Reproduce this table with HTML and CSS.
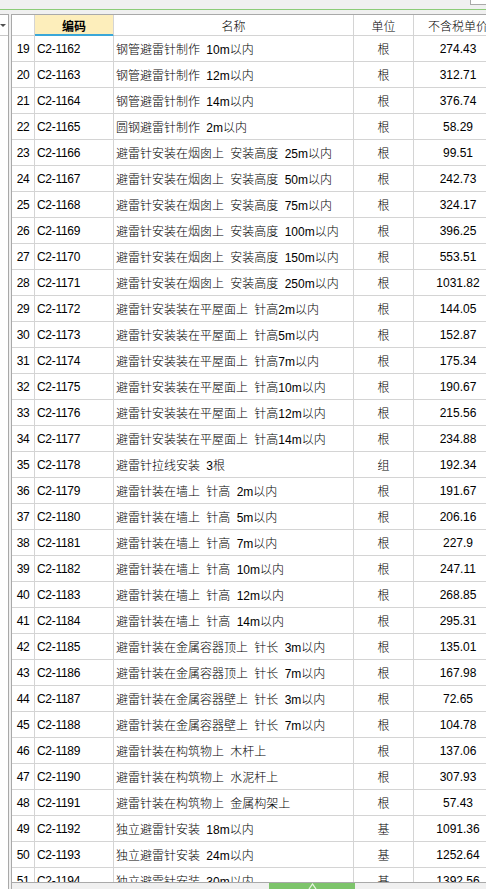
FILE: index.html
```html
<!DOCTYPE html>
<html lang="zh-CN">
<head>
<meta charset="utf-8">
<title>定额列表</title>
<link rel="stylesheet" href="styles.css">
</head>
<body>
<div class="top"><div class="corner"></div></div>
<div class="rule"></div>
<div class="main">
  <div class="side">
    <div class="side-head"><span class="caret"></span></div>
  </div>
  <div class="frame">
    <div class="viewport">
      <div class="grid">
        <div class="hd"></div><div class="hd code-hd">编码</div><div class="hd">名称</div><div class="hd">单位</div><div class="hd">不含税单价</div>

        <div class="c rn">19</div><div class="c code">C2-1162</div><div class="c name">钢管避雷针制作 10m以内</div><div class="c unit">根</div><div class="c price">274.43</div>
        <div class="c rn">20</div><div class="c code">C2-1163</div><div class="c name">钢管避雷针制作 12m以内</div><div class="c unit">根</div><div class="c price">312.71</div>
        <div class="c rn">21</div><div class="c code">C2-1164</div><div class="c name">钢管避雷针制作 14m以内</div><div class="c unit">根</div><div class="c price">376.74</div>
        <div class="c rn">22</div><div class="c code">C2-1165</div><div class="c name">圆钢避雷针制作 2m以内</div><div class="c unit">根</div><div class="c price">58.29</div>
        <div class="c rn">23</div><div class="c code">C2-1166</div><div class="c name">避雷针安装在烟囱上 安装高度 25m以内</div><div class="c unit">根</div><div class="c price">99.51</div>
        <div class="c rn">24</div><div class="c code">C2-1167</div><div class="c name">避雷针安装在烟囱上 安装高度 50m以内</div><div class="c unit">根</div><div class="c price">242.73</div>
        <div class="c rn">25</div><div class="c code">C2-1168</div><div class="c name">避雷针安装在烟囱上 安装高度 75m以内</div><div class="c unit">根</div><div class="c price">324.17</div>
        <div class="c rn">26</div><div class="c code">C2-1169</div><div class="c name">避雷针安装在烟囱上 安装高度 100m以内</div><div class="c unit">根</div><div class="c price">396.25</div>
        <div class="c rn">27</div><div class="c code">C2-1170</div><div class="c name">避雷针安装在烟囱上 安装高度 150m以内</div><div class="c unit">根</div><div class="c price">553.51</div>
        <div class="c rn">28</div><div class="c code">C2-1171</div><div class="c name">避雷针安装在烟囱上 安装高度 250m以内</div><div class="c unit">根</div><div class="c price">1031.82</div>
        <div class="c rn">29</div><div class="c code">C2-1172</div><div class="c name">避雷针安装装在平屋面上 针高2m以内</div><div class="c unit">根</div><div class="c price">144.05</div>
        <div class="c rn">30</div><div class="c code">C2-1173</div><div class="c name">避雷针安装装在平屋面上 针高5m以内</div><div class="c unit">根</div><div class="c price">152.87</div>
        <div class="c rn">31</div><div class="c code">C2-1174</div><div class="c name">避雷针安装装在平屋面上 针高7m以内</div><div class="c unit">根</div><div class="c price">175.34</div>
        <div class="c rn">32</div><div class="c code">C2-1175</div><div class="c name">避雷针安装装在平屋面上 针高10m以内</div><div class="c unit">根</div><div class="c price">190.67</div>
        <div class="c rn">33</div><div class="c code">C2-1176</div><div class="c name">避雷针安装装在平屋面上 针高12m以内</div><div class="c unit">根</div><div class="c price">215.56</div>
        <div class="c rn">34</div><div class="c code">C2-1177</div><div class="c name">避雷针安装装在平屋面上 针高14m以内</div><div class="c unit">根</div><div class="c price">234.88</div>
        <div class="c rn">35</div><div class="c code">C2-1178</div><div class="c name">避雷针拉线安装 3根</div><div class="c unit">组</div><div class="c price">192.34</div>
        <div class="c rn">36</div><div class="c code">C2-1179</div><div class="c name">避雷针装在墙上 针高 2m以内</div><div class="c unit">根</div><div class="c price">191.67</div>
        <div class="c rn">37</div><div class="c code">C2-1180</div><div class="c name">避雷针装在墙上 针高 5m以内</div><div class="c unit">根</div><div class="c price">206.16</div>
        <div class="c rn">38</div><div class="c code">C2-1181</div><div class="c name">避雷针装在墙上 针高 7m以内</div><div class="c unit">根</div><div class="c price">227.9</div>
        <div class="c rn">39</div><div class="c code">C2-1182</div><div class="c name">避雷针装在墙上 针高 10m以内</div><div class="c unit">根</div><div class="c price">247.11</div>
        <div class="c rn">40</div><div class="c code">C2-1183</div><div class="c name">避雷针装在墙上 针高 12m以内</div><div class="c unit">根</div><div class="c price">268.85</div>
        <div class="c rn">41</div><div class="c code">C2-1184</div><div class="c name">避雷针装在墙上 针高 14m以内</div><div class="c unit">根</div><div class="c price">295.31</div>
        <div class="c rn">42</div><div class="c code">C2-1185</div><div class="c name">避雷针装在金属容器顶上 针长 3m以内</div><div class="c unit">根</div><div class="c price">135.01</div>
        <div class="c rn">43</div><div class="c code">C2-1186</div><div class="c name">避雷针装在金属容器顶上 针长 7m以内</div><div class="c unit">根</div><div class="c price">167.98</div>
        <div class="c rn">44</div><div class="c code">C2-1187</div><div class="c name">避雷针装在金属容器壁上 针长 3m以内</div><div class="c unit">根</div><div class="c price">72.65</div>
        <div class="c rn">45</div><div class="c code">C2-1188</div><div class="c name">避雷针装在金属容器壁上 针长 7m以内</div><div class="c unit">根</div><div class="c price">104.78</div>
        <div class="c rn">46</div><div class="c code">C2-1189</div><div class="c name">避雷针装在构筑物上 木杆上</div><div class="c unit">根</div><div class="c price">137.06</div>
        <div class="c rn">47</div><div class="c code">C2-1190</div><div class="c name">避雷针装在构筑物上 水泥杆上</div><div class="c unit">根</div><div class="c price">307.93</div>
        <div class="c rn">48</div><div class="c code">C2-1191</div><div class="c name">避雷针装在构筑物上 金属构架上</div><div class="c unit">根</div><div class="c price">57.43</div>
        <div class="c rn">49</div><div class="c code">C2-1192</div><div class="c name">独立避雷针安装 18m以内</div><div class="c unit">基</div><div class="c price">1091.36</div>
        <div class="c rn">50</div><div class="c code">C2-1193</div><div class="c name">独立避雷针安装 24m以内</div><div class="c unit">基</div><div class="c price">1252.64</div>
        <div class="c rn">51</div><div class="c code">C2-1194</div><div class="c name">独立避雷针安装 30m以内</div><div class="c unit">基</div><div class="c price">1392.56</div>
      </div>
    </div>
    <div class="hscroll">
      <div class="thumb">
        <svg class="grip" width="9" height="6" viewBox="0 0 9 6"><polyline points="1,6 4.5,1 8,6" fill="none" stroke="#e6f4e0" stroke-width="1.3"/></svg>
      </div>
    </div>
  </div>
</div>
</body>
</html>
```

FILE: styles.css
```css
html, body {
  margin: 0;
  padding: 0;
  overflow: hidden;
  background: #f0f0f0;
}
body {
  width: 486px;
  height: 889px;
  font-family: "Liberation Sans", "Noto Sans CJK SC", sans-serif;
  font-size: 12px;
  font-weight: 300;
  color: #000;
}
.top {
  height: 9px;
  display: flex;
  justify-content: flex-end;
}
.corner {
  width: 15px;
  height: 4px;
  background: #fff;
  border-left: 1px solid #a9a9a9;
  border-bottom: 1px solid #a9a9a9;
}
.rule {
  height: 1px;
  background: #8ccc78;
}
.main {
  display: flex;
  padding-top: 4px;
  align-items: flex-start;
}
.side {
  width: 8px;
  height: 900px;
  background: #fff;
  border-top: 1px solid #a9a9a9;
  border-right: 1px solid #a9a9a9;
  margin-right: 2px;
  flex: none;
}
.side-head {
  height: 20px;
  border-bottom: 1px solid #c8c8c8;
  display: flex;
  align-items: center;
}
.caret {
  width: 0;
  height: 0;
  margin-top: 1px;
  border-left: 3px solid transparent;
  border-right: 3px solid transparent;
  border-top: 3px solid #505050;
}
.frame {
  flex: 1;
  min-width: 0;
  border-top: 1px solid #a9a9a9;
  border-left: 1px solid #a9a9a9;
  background: #fff;
}
.viewport {
  height: 867px;
  overflow: hidden;
}
.grid {
  display: grid;
  grid-template-columns: 23px 79px 240px 60px 89px;
  grid-auto-rows: 26px;
  grid-template-rows: 21px;
  width: 491px;
}
.hd, .c {
  box-sizing: border-box;
  border-right: 1px solid #d4d4d4;
  border-bottom: 1px solid #d4d4d4;
  display: flex;
  align-items: center;
  justify-content: center;
  white-space: nowrap;
  overflow: hidden;
}
.code-hd {
  background: #fdeebb;
  font-weight: bold;
  border-bottom-color: #3aa7d8;
  box-shadow: inset 0 -1px 0 #3aa7d8;
}
.rn, .code {
  letter-spacing: -0.3px;
}
.code, .name {
  justify-content: flex-start;
  padding-left: 2px;
}
.name {
  word-spacing: 3px;
}
.hscroll {
  height: 17px;
  border-top: 1px solid #a9a9a9;
  background: #f0f0f0;
  padding-left: 257px;
}
.thumb {
  width: 86px;
  height: 17px;
  background: #7dc46b;
  display: flex;
  justify-content: center;
  align-items: flex-start;
}
.grip {
  display: block;
}
```
